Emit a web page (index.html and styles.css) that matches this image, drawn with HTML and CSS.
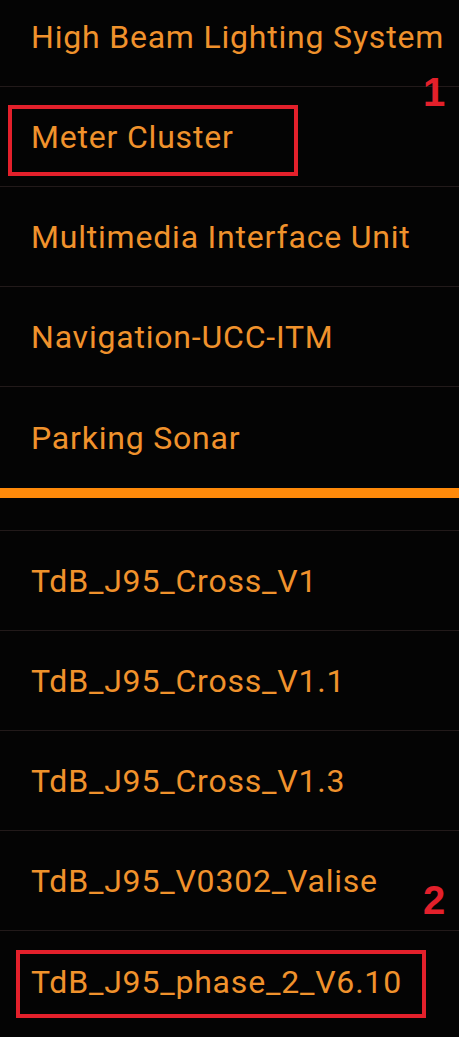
FILE: index.html
```html
<!DOCTYPE html>
<html>
<head>
<meta charset="utf-8">
<link rel="stylesheet" href="styles.css">
</head>
<body>
<div class="screen">
  <div class="list top">
    <div class="item">High Beam Lighting System</div>
    <div class="item">Meter Cluster</div>
    <div class="item">Multimedia Interface Unit</div>
    <div class="item">Navigation-UCC-ITM</div>
    <div class="item last">Parking Sonar</div>
  </div>
  <div class="accent"></div>
  <div class="spacer"></div>
  <div class="list">
    <div class="item">TdB_J95_Cross_V1</div>
    <div class="item">TdB_J95_Cross_V1.1</div>
    <div class="item">TdB_J95_Cross_V1.3</div>
    <div class="item">TdB_J95_V0302_Valise</div>
    <div class="item last">TdB_J95_phase_2_V6.10</div>
  </div>
  <div class="mark box1"></div>
  <div class="mark box2"></div>
  <div class="num num1">1</div>
  <div class="num num2">2</div>
</div>
</body>
</html>
```
FILE: styles.css
```css
html, body {
  margin: 0;
  padding: 0;
  background: #040404;
}
.screen {
  position: relative;
  width: 459px;
  height: 1037px;
  overflow: hidden;
  font-family: Roboto, "Noto Sans", sans-serif;
}
.list.top {
  margin-top: -13px;
}
.item {
  height: 99px;
  border-bottom: 1px solid #221a1a;
  display: flex;
  align-items: center;
  padding-left: 31px;
  font-size: 32px;
  letter-spacing: 0.8px;
  color: #f0922c;
  white-space: nowrap;
}
.item.last {
  border-bottom: none;
  height: 101px;
}
.accent {
  height: 10px;
  background: #ff8a0a;
}
.spacer {
  height: 32px;
  border-bottom: 1px solid #221a1a;
}
.mark {
  position: absolute;
  border: 4px solid #e3202b;
  box-sizing: border-box;
}
.box1 {
  left: 8px;
  top: 105px;
  width: 290px;
  height: 71px;
}
.box2 {
  left: 16px;
  top: 950px;
  width: 410px;
  height: 68px;
}
.num {
  position: absolute;
  font-family: "Liberation Sans", Arial, sans-serif;
  font-weight: bold;
  font-size: 40px;
  line-height: 40px;
  color: #e3202b;
}
.num1 {
  left: 423px;
  top: 72px;
}
.num2 {
  left: 423px;
  top: 880px;
}
```
